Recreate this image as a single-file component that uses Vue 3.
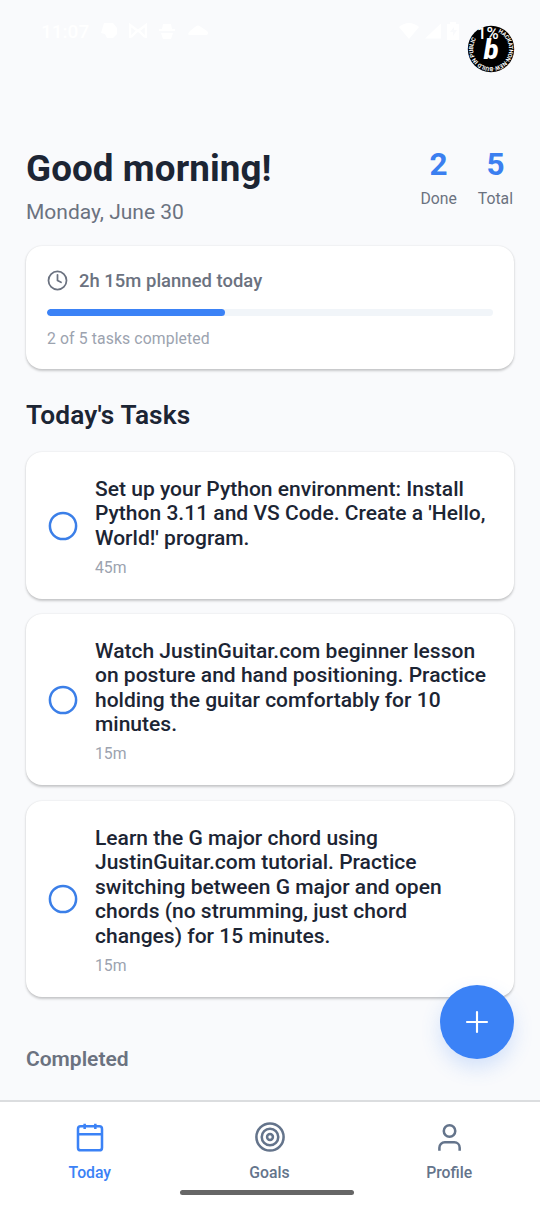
<script setup>
const stats = [
  { value: 2, label: 'Done' },
  { value: 5, label: 'Total' },
]
const progress = 40
const tasks = [
  {
    lines: ['Set up your Python environment: Install', "Python 3.11 and VS Code. Create a 'Hello,", "World!' program."],
    time: '45m',
  },
  {
    lines: ['Watch JustinGuitar.com beginner lesson', 'on posture and hand positioning. Practice', 'holding the guitar comfortably for 10', 'minutes.'],
    time: '15m',
  },
  {
    lines: ['Learn the G major chord using', 'JustinGuitar.com tutorial. Practice', 'switching between G major and open', 'chords (no strumming, just chord', 'changes) for 15 minutes.'],
    time: '15m',
  },
]
</script>

<template>
  <div class="screen">
    <header class="status">
      <div class="status-group left">
        <span class="clock">11:07</span>
        <svg width="18" height="16" viewBox="0 0 18 16"><path d="M4 0h9l4 5v6l-4 4H7l-2-4-4-1z" /></svg>
        <svg width="18" height="16" viewBox="0 0 18 16"><path d="M1 15V2l8 6 8-6v13M2 14l6-6M16 14l-6-6" fill="none" stroke="#fff" stroke-width="2.4" /></svg>
        <svg width="18" height="16" viewBox="0 0 18 16"><path d="M5 1h8l1 5h3v2H1V6h3zM3 10h12l-2 6H5z" /></svg>
        <svg width="22" height="16" viewBox="0 0 22 16"><path d="M2 12q-2-1 1-4l5-4q3-3 6 0l6 4q2 2 0 4z" /></svg>
      </div>
      <div class="status-group">
        <svg width="20" height="16" viewBox="0 0 20 16"><path d="M0 4q10-8 20 0L10 16z" /></svg>
        <svg width="16" height="16" viewBox="0 0 17 16"><path d="M17 0v16H0z" /></svg>
        <svg width="12" height="18" viewBox="0 0 12 18"><path d="M3 0h6v2h3v16H0V2h3z" /><path d="M7 5l-4 5h3v4l4-6H7z" fill="#f9fafc" /></svg>
      </div>
    </header>
    <svg class="logo" width="48" height="48" viewBox="0 0 48 48">
      <defs><path id="ring" d="M31 7.5a18 18 0 1 1 -22.5 7.5" /></defs>
      <circle cx="24" cy="24" r="23.2" fill="#000" />
      <text class="ring-text"><textPath href="#ring" textLength="88">HACKATHON·NEW·BUILD IN PUBLIC</textPath></text>
      <text class="logo-b" x="24" y="33.5" text-anchor="middle">b</text>
      <text class="percent" x="10" y="13.5">1%</text>
    </svg>

    <main class="content">
      <section class="hero">
        <div>
          <h1>Good morning!</h1>
          <p class="date">Monday, June 30</p>
        </div>
        <div class="stats">
          <div v-for="s in stats" :key="s.label" class="stat">
            <strong>{{ s.value }}</strong>
            <span>{{ s.label }}</span>
          </div>
        </div>
      </section>

      <section class="card summary">
        <div class="planned">
          <svg width="21" height="21" viewBox="0 0 24 24" fill="none" stroke="#6b7280" stroke-width="2" stroke-linecap="round" stroke-linejoin="round"><circle cx="12" cy="12" r="10.3" /><path d="M12 5.5V12l4 2" /></svg>
          <span>2h 15m planned today</span>
        </div>
        <div class="track"><div class="fill" :style="{ width: progress + '%' }"></div></div>
        <p class="note">2 of 5 tasks completed</p>
      </section>

      <h2>Today's Tasks</h2>
      <div class="list">
        <article v-for="(t, i) in tasks" :key="i" class="card task">
          <svg class="check" width="30" height="30" viewBox="0 0 30 30"><circle cx="15" cy="15" r="13.1" /></svg>
          <div>
            <p class="title"><span v-for="l in t.lines" :key="l">{{ l }}</span></p>
            <p class="time">{{ t.time }}</p>
          </div>
        </article>
      </div>
      <h3>Completed</h3>
    </main>

    <button class="fab" aria-label="Add">
      <svg width="32" height="32" viewBox="0 0 24 24" fill="none" stroke="#fff" stroke-width="1.6" stroke-linecap="round"><path d="M4.5 12h15M12 4.5v15" /></svg>
    </button>

    <nav class="tabs">
      <div class="tab active">
        <svg width="32" height="32" viewBox="0 0 24 24"><rect x="3" y="4" width="18" height="18" rx="2" /><path d="M8 2v4M16 2v4M3 10h18" /></svg>
        <span>Today</span>
      </div>
      <div class="tab">
        <svg width="32" height="32" viewBox="0 0 24 24"><circle cx="12" cy="12" r="10.2" /><circle cx="12" cy="12" r="6.2" /><circle cx="12" cy="12" r="2.2" /></svg>
        <span>Goals</span>
      </div>
      <div class="tab">
        <svg width="32" height="32" viewBox="0 0 24 24"><path d="M20 22.3v-2.3a4 4 0 0 0-4-4H8.8a4 4 0 0 0-4 4v2.3" /><circle cx="12.4" cy="7.5" r="4.3" /></svg>
        <span>Profile</span>
      </div>
      <span class="home"></span>
    </nav>
  </div>
</template>

<style>
body { margin: 0; background: #f9fafc; }
</style>

<style scoped>
.screen {
  position: relative;
  display: flex;
  flex-direction: column;
  box-sizing: border-box;
  width: 540px;
  height: 1206px;
  overflow: hidden;
  background: #f9fafc;
  font-family: Roboto, "Liberation Sans", sans-serif;
  color: #1c2534;
}
h1, h2, h3, p { margin: 0; }
svg { display: block; flex: none; }
.status {
  display: flex;
  justify-content: space-between;
  align-items: center;
  box-sizing: border-box;
  height: 62px;
  padding: 0 81px 0 41px;
  fill: #fff;
  color: #fff;
}
.status-group { display: flex; align-items: center; gap: 6px; }
.status-group.left { gap: 11px; }
.clock { font-size: 19px; font-weight: 500; }
.logo { position: absolute; left: 467px; top: 25px; }
.ring-text { font-size: 5.8px; font-weight: 700; fill: #fff; }
.logo-b { font-size: 27px; font-weight: 900; font-style: italic; fill: #fff; }
.percent { font-size: 16.5px; font-weight: 500; fill: #fff; }
.content { flex: 1; padding: 84px 26px 0; min-height: 0; }
.hero { display: flex; justify-content: space-between; height: 100px; }
h1 { padding-top: 1px; font-size: 36.75px; line-height: 44px; font-weight: 700; letter-spacing: 0.1px; }
.date { margin-top: 8px; font-size: 21px; line-height: 26px; color: #6b7280; }
.stats { display: flex; gap: 21px; padding-right: 1px; }
.stat { display: flex; flex-direction: column; align-items: center; }
.stat strong { font-size: 31.5px; line-height: 38px; font-weight: 700; color: #3b7ff0; }
.stat span { margin-top: 5px; font-size: 15.75px; line-height: 20px; color: #6b7280; }
.card {
  box-sizing: border-box;
  border-radius: 16px;
  background: #fff;
  box-shadow: 0 1.5px 2.5px rgba(0, 0, 0, 0.2), 0 0 2px rgba(0, 0, 0, 0.06);
}
.summary { height: 123px; padding: 21px 21px 0; }
.planned { display: flex; align-items: center; gap: 11px; height: 26px; font-size: 18.4px; font-weight: 500; letter-spacing: 0.04px; color: #6b7280; }
.track { height: 7px; margin-top: 16px; border-radius: 4px; background: #f1f5f9; overflow: hidden; }
.fill { height: 100%; border-radius: 4px; background: #3b82f6; }
.note { margin-top: 13px; font-size: 15.75px; line-height: 20px; letter-spacing: 0.12px; color: #9ca3af; }
h2 { margin-top: 30px; font-size: 26.25px; line-height: 32px; font-weight: 600; letter-spacing: 0.12px; }
.list { display: flex; flex-direction: column; gap: 15.6px; margin-top: 20.8px; }
.task { display: flex; align-items: center; gap: 17px; padding: 24.9px 20px 22px 22px; }
.check { position: relative; top: -1px; fill: none; stroke: #3b7fe8; stroke-width: 2.5; }
.title { font-size: 21px; line-height: 24.45px; font-weight: 500; letter-spacing: 0.01px; }
.title span { display: block; white-space: nowrap; }
.time { margin-top: 8.5px; font-size: 15.75px; line-height: 18px; color: #9ca3af; }
h3 { margin-top: 48.5px; font-size: 21px; line-height: 28px; font-weight: 600; color: #6b7280; }
.fab {
  position: absolute;
  left: 440px;
  top: 985px;
  display: grid;
  place-items: center;
  width: 74px;
  height: 74px;
  padding: 0;
  border: 0;
  border-radius: 50%;
  background: #3b82f6;
  box-shadow: 0 9px 20px rgba(59, 130, 246, 0.2);
}
.tabs {
  position: relative;
  display: flex;
  box-sizing: border-box;
  height: 106px;
  padding: 19px 1px 0 0;
  border-top: 2px solid #dbdddf;
  background: #fff;
}
.tab { flex: 1; display: flex; flex-direction: column; align-items: center; color: #64748b; }
.tab.active { color: #3b82f6; }
.tab svg { fill: none; stroke: currentColor; stroke-width: 1.9; stroke-linecap: butt; stroke-linejoin: round; }
.tab span { margin-top: 10px; font-size: 15.75px; line-height: 20px; font-weight: 500; }
.home { position: absolute; left: 180px; top: 88px; width: 174px; height: 5px; border-radius: 3px; background: #666; }
</style>
